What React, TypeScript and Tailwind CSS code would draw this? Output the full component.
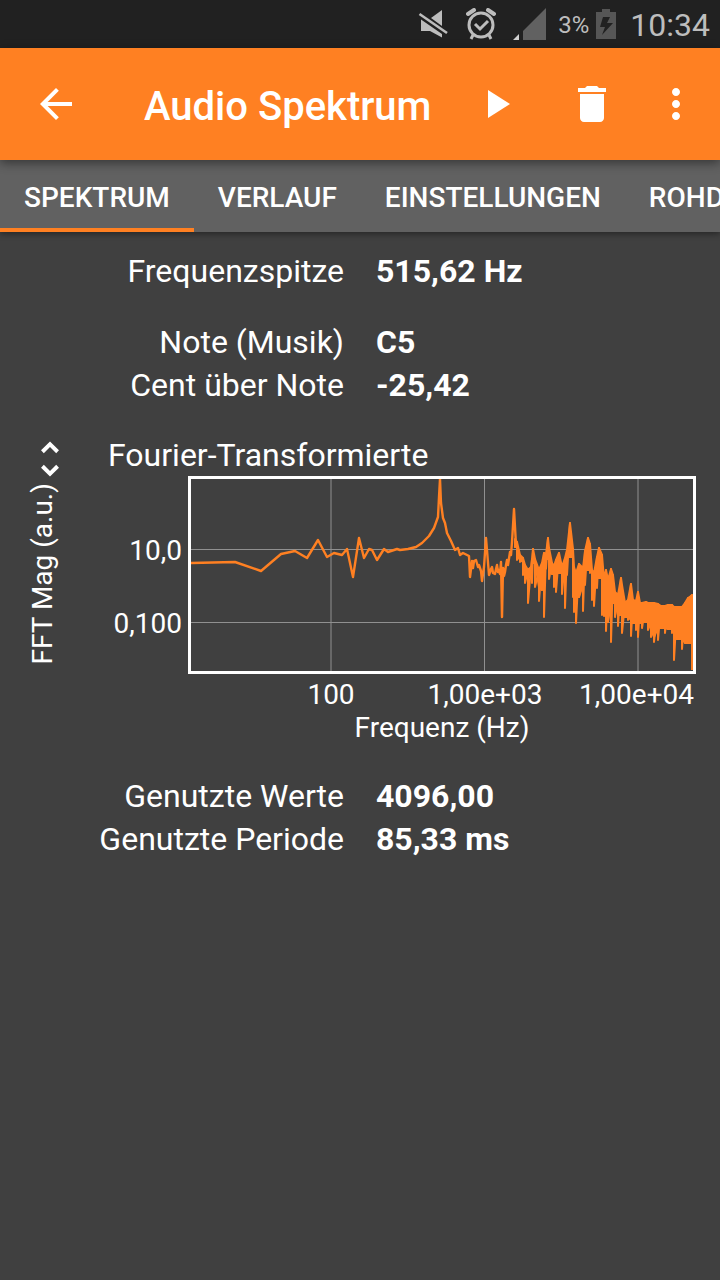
import { MdArrowBack, MdDelete, MdMoreVert, MdPlayArrow } from 'react-icons/md'

const tabs = ['Spektrum', 'Verlauf', 'Einstellungen', 'Rohdaten']

// Single FFT bins, still far enough apart to be drawn as a line
const line =
  '0,84 44,83 70,92 90,75 104,72 116,79 127,61 136,78 143,74 151,76 156,70 162,98 168,59 173,79 178,70 181,71 186,81 193,70 197,73 206,70 209,71 217,70 225,68 231,64 238,57 243,49 247,38 248,18 249,0 250,24 252,39 254,44 256,54 260,62 264,71 267,69 269,76 272,74 278,77 279,98 281,82 282,89 283,82 285,81 287,88 288,86 290,92 291,102 293,88 295,59 298,96 300,90 301,88 302,94 304,95 305,90 306,86 307,93 308,91 309,95 310,83 311,138 312,89 313,97 314,93 315,86 316,81 317,86 319,73 320,76 321,63 323,30 325,66'

// Dense part of the spectrum: x, highest and lowest value
const bands = [
  [324, 60, 68], [326, 63, 81], [329, 76, 83], [332, 79, 96], [334, 86, 104], [337, 91, 124],
  [340, 88, 98], [341, 80, 104], [342, 70, 84], [344, 80, 108], [348, 91, 122], [351, 84, 111],
  [353, 74, 138], [355, 75, 90], [357, 59, 80], [358, 69, 100], [361, 84, 95], [363, 87, 108],
  [365, 81, 113], [368, 74, 94], [371, 88, 115], [374, 79, 129], [376, 71, 96], [379, 44, 78],
  [382, 70, 118], [383, 88, 133], [385, 94, 144], [388, 85, 118], [392, 89, 132], [394, 72, 106],
  [397, 59, 91], [399, 65, 94], [401, 91, 121], [403, 94, 127], [406, 78, 109], [408, 69, 99],
  [411, 76, 136], [413, 100, 137], [415, 91, 152], [417, 101, 143], [420, 90, 163], [422, 96, 124],
  [424, 113, 138], [427, 116, 147], [430, 99, 136], [431, 106, 154], [434, 124, 138], [437, 121, 141],
  [440, 105, 157], [442, 121, 144], [445, 122, 151], [447, 113, 158], [449, 124, 144], [451, 124, 149],
  [455, 123, 143], [457, 124, 151], [460, 124, 158], [463, 124, 163], [467, 125, 161], [470, 127, 149],
  [474, 127, 154], [477, 126, 150], [481, 126, 154], [483, 128, 181], [486, 128, 160], [491, 128, 170],
  [494, 124, 164], [497, 119, 164], [500, 117, 164], [501, 116, 191],
]

const bandLine = bands.map(([x, top, bottom]) => `${x},${top} ${x},${bottom}`).join(' ')

// Filled body: follows the peaks on top, leaves the lone dips out below
const floor = bands.map(([x, top, bottom], i) => {
  const before = bands[i - 1] ?? bands[i]
  const after = bands[i + 1] ?? bands[i]
  return `${x},${Math.max(top, Math.min(before[2], bottom, after[2]))}`
})
const bandBody = [...bands.map(([x, top]) => `${x},${top}`), ...floor.reverse()].join(' ')

function StatusBar() {
  return (
    <div className="flex h-12 items-center justify-end bg-[#212121] pr-2.5 text-[#bdbdbd]">
      <svg className="h-[30px] w-[30px]" viewBox="0 0 30 30" fill="currentColor">
        <path d="M3 10.5L24 25v3.5L12 22H3z" />
        <path d="M24 1v16L13 9z" />
        <path d="M1.5 5L29 24" stroke="currentColor" strokeWidth="2.6" />
      </svg>
      <svg className="ml-[18px] h-8 w-[30px]" viewBox="0 0 30 32" fill="none" stroke="currentColor">
        <circle cx="15" cy="17" r="12" strokeWidth="3" />
        <path d="M2 6l6-4M22 2l6 4" strokeWidth="4" strokeLinecap="round" />
        <path d="M9 16l5 5 8-8" strokeWidth="3" />
        <path d="M7 27l-2 4M23 27l2 4" strokeWidth="3" />
      </svg>
      <svg className="ml-[17px] h-8 w-[33px]" viewBox="0 0 33 32">
        <path d="M10 32V23L33 0v32z" fill="#616161" />
        <path d="M0 32l6-6v6z" fill="#d0d0d0" />
      </svg>
      <span className="ml-3 pt-0.5 text-2xl">3%</span>
      <svg className="ml-[7px] h-[30px] w-5" viewBox="0 0 20 30">
        <path d="M6 0h8v3h6v27H0V3h6z" fill="#565656" />
        <path d="M7 8h7l-3 6h6L6 26l3-8H4z" fill="#212121" />
      </svg>
      <span className="ml-[14px] pt-0.5 text-[32px] leading-8">10:34</span>
    </div>
  )
}

function Toolbar() {
  return (
    <header className="relative z-10 flex h-28 items-center bg-[#ff8022] pr-5 pl-8 shadow-[0_3px_10px_rgba(0,0,0,0.45)]">
      <button type="button" aria-label="Zurück">
        <MdArrowBack size={48} />
      </button>
      <h1 className="ml-16 flex-1 pt-1.5 text-[40px] leading-[48px] font-medium whitespace-nowrap">Audio Spektrum</h1>
      <button type="button" aria-label="Start">
        <MdPlayArrow size={48} />
      </button>
      <button type="button" aria-label="Daten löschen" className="ml-12">
        <MdDelete size={48} />
      </button>
      <button type="button" aria-label="Mehr" className="ml-9">
        <MdMoreVert size={48} />
      </button>
    </header>
  )
}

function Tabs() {
  return (
    <nav className="relative flex h-[72px] overflow-hidden bg-[#616161] shadow-[0_2px_6px_rgba(0,0,0,0.4)]">
      {tabs.map((tab, i) => (
        <button
          key={tab}
          type="button"
          className={`shrink-0 border-b-4 px-6 pt-2 text-[28px] leading-8 font-medium uppercase ${
            i === 0 ? 'border-[#ff8022]' : 'border-transparent'
          }`}
        >
          {tab}
        </button>
      ))}
    </nav>
  )
}

function Value({ label, value }: { label: string; value: string }) {
  return (
    <div className="grid grid-cols-2 text-[32px] leading-[43px]">
      <dt className="pr-4 text-right whitespace-nowrap">{label}</dt>
      <dd className="pl-4 font-bold whitespace-nowrap">{value}</dd>
    </div>
  )
}

function Spectrum() {
  return (
    <svg className="block h-48 w-full" viewBox="0 0 502 192" preserveAspectRatio="none">
      <path d="M0 70.5h502M0 143.5h502M140 0v192M293.5 0v192M447 0v192" stroke="#909090" strokeWidth="1" />
      <g stroke="#ff8022" strokeWidth="2" fill="none" strokeLinejoin="round">
        <polyline points={line} strokeWidth="2.4" />
        <polyline points={bandLine} />
        <polygon points={bandBody} fill="#ff8022" />
      </g>
    </svg>
  )
}

function Graph() {
  return (
    <section className="flex pr-6 pl-[26px]">
      <div className="flex w-[82px] flex-col items-start pt-1.5">
        <div className="flex flex-col items-end">
          <svg className="h-9 w-[18px]" viewBox="7.4 3 9.2 18" fill="currentColor">
            <path d="M12 5.83L15.17 9l1.41-1.41L12 3 7.41 7.59 8.83 9 12 5.83zm0 12.34L8.83 15l-1.41 1.41L12 21l4.59-4.59L15.17 15 12 18.17z" />
          </svg>
          <span className="mt-1.5 rotate-180 text-[28px] leading-[33px] whitespace-nowrap [writing-mode:vertical-rl]">
            FFT Mag (a.u.)
          </span>
        </div>
      </div>
      <div className="flex-1">
        <h2 className="text-[32px] leading-[41px]">Fourier-Transformierte</h2>
        <div className="flex text-[28px]">
          <div className="flex w-20 flex-col pt-[38px] pr-1.5 text-right leading-[73px]">
            <span>10,0</span>
            <span>0,100</span>
          </div>
          <div className="flex-1">
            <div className="border-[3px] border-white">
              <Spectrum />
            </div>
            <div className="grid grid-cols-[66fr_154fr_154fr_134fr] pt-1 text-center leading-[33px]">
              <span className="col-start-2">100</span>
              <span>1,00e+03</span>
              <span className="pr-0.5 text-right">1,00e+04</span>
            </div>
            <p className="text-center leading-[33px]">Frequenz (Hz)</p>
          </div>
        </div>
      </div>
    </section>
  )
}

export default function App() {
  return (
    <div className="min-h-screen overflow-x-hidden bg-[#404040] font-['Roboto',sans-serif] text-white">
      <StatusBar />
      <Toolbar />
      <Tabs />
      <main className="flex flex-col gap-7 pt-[18px]">
        <dl>
          <Value label="Frequenzspitze" value="515,62 Hz" />
        </dl>
        <dl>
          <Value label="Note (Musik)" value="C5" />
          <Value label="Cent über Note" value="-25,42" />
        </dl>
        <Graph />
        <dl className="pt-[3px]">
          <Value label="Genutzte Werte" value="4096,00" />
          <Value label="Genutzte Periode" value="85,33 ms" />
        </dl>
      </main>
    </div>
  )
}
